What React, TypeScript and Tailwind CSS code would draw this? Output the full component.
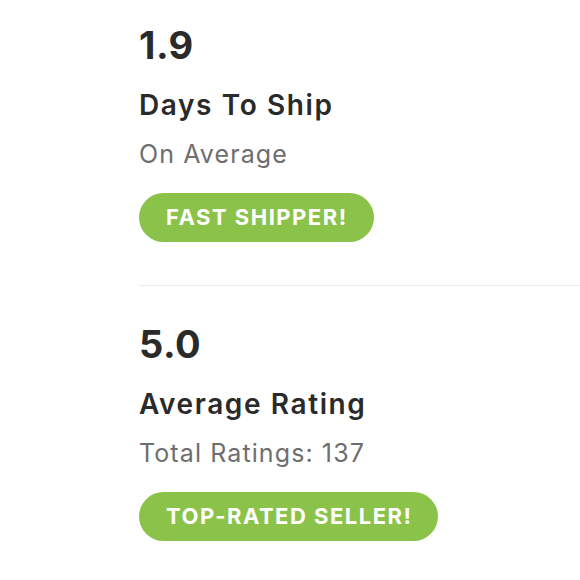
import React from 'react';

type Stat = {
  value: string;
  title: string;
  subtitle: string;
  badge: string;
};

const stats: Stat[] = [
  { value: '1.9', title: 'Days To Ship', subtitle: 'On Average', badge: 'FAST SHIPPER!' },
  { value: '5.0', title: 'Average Rating', subtitle: 'Total Ratings: 137', badge: 'TOP-RATED SELLER!' },
];

const StatBlock: React.FC<{ stat: Stat }> = ({ stat }) => (
  <div className="flex flex-col items-start">
    <div className="text-[38px] leading-[40px] font-bold tracking-[0.5px] text-[#2a2a2a]">{stat.value}</div>
    <div className="mt-[24px] text-[28px] leading-[32px] font-semibold tracking-[1.6px] text-[#2a2a2a]">
      {stat.title}
    </div>
    <div className="mt-[18px] text-[25px] leading-[30px] tracking-[1.1px] text-[#6e6e6e]">{stat.subtitle}</div>
    <div className="mt-[24px] h-[49px] pl-[27px] pr-[26px] flex items-center rounded-full bg-[#8bc34a] text-white text-[22px] font-bold tracking-[1.5px]">
      {stat.badge}
    </div>
  </div>
);

export default function App() {
  return (
    <div className="w-[580px] h-[580px] overflow-hidden bg-white pl-[139px] pt-[25px] font-['Inter',sans-serif]">
      <StatBlock stat={stats[0]} />
      <div className="mt-[43px] h-px bg-[#ececec]" />
      <div className="pt-[38px]">
        <StatBlock stat={stats[1]} />
      </div>
    </div>
  );
}
